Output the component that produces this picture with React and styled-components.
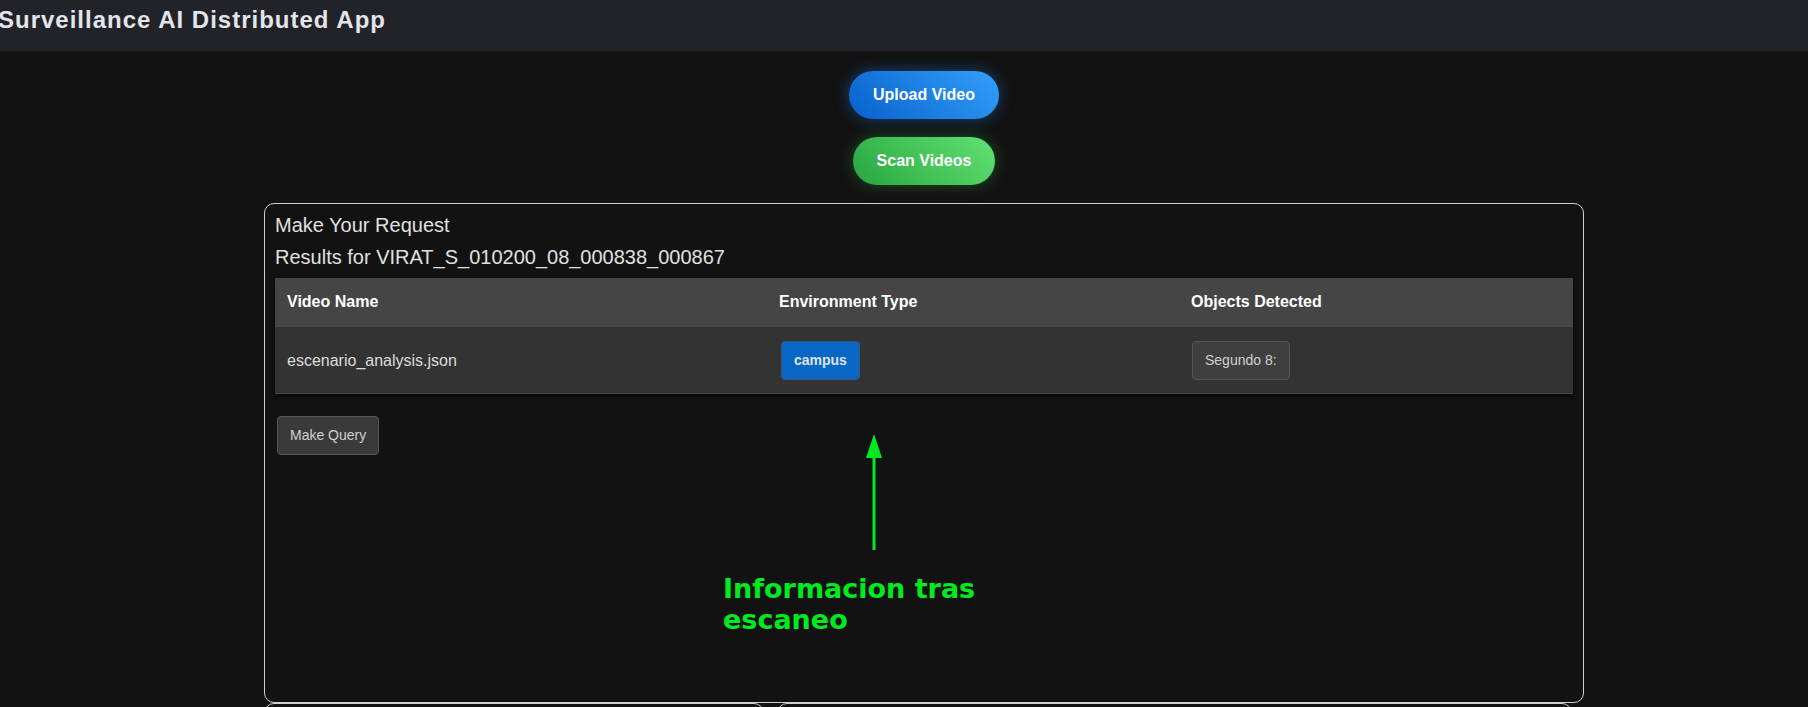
import React from "react";
import styled, { createGlobalStyle } from "styled-components";

const GlobalStyle = createGlobalStyle`
  html, body {
    margin: 0;
    padding: 0;
    background: #121212;
    overflow: hidden;
  }
  body {
    font-family: "Liberation Sans", Arial, sans-serif;
    color: #e0e0e0;
  }
  * { box-sizing: border-box; }
`;

const Header = styled.header`
  height: 51px;
  background: #212328;
  display: flex;
  align-items: flex-start;
`;

const Title = styled.h1`
  margin: 0 0 0 -2px;
  font-size: 24px;
  line-height: 40px;
  font-weight: 700;
  letter-spacing: 1px;
  color: #e2e5e9;
`;

const Main = styled.main`
  padding-left: 40px;
  display: flex;
  flex-direction: column;
  align-items: center;
`;

const PillButton = styled.button`
  margin-top: ${(p) => p.$top}px;
  padding: 15px 24px;
  border: none;
  border-radius: 999px;
  font-family: "Liberation Sans", Arial, sans-serif;
  font-size: 16px;
  line-height: 18px;
  font-weight: 700;
  color: #ffffff;
  cursor: pointer;
  background: ${(p) =>
    p.$variant === "green"
      ? "linear-gradient(45deg, #27a640, #62e272)"
      : "linear-gradient(45deg, #0860cc, #32a0fa)"};
  box-shadow: ${(p) =>
    p.$variant === "green"
      ? "0 0 16px rgba(60, 200, 80, 0.35)"
      : "0 0 16px rgba(30, 130, 240, 0.45)"};
`;

const Panel = styled.section`
  position: relative;
  margin-top: 18px;
  width: 1320px;
  height: 500px;
  padding: 10px 10px 10px;
  border: 1px solid #cfcfcf;
  border-radius: 10px;
`;

const PanelText = styled.p`
  margin: 0 0 ${(p) => p.$gap}px;
  font-size: 20px;
  line-height: 23px;
  color: #e0e0e0;
`;

const Table = styled.table`
  width: 100%;
  border-collapse: collapse;
  box-shadow: 0 2px 4px rgba(0, 0, 0, 0.6);
`;

const HeadCell = styled.th`
  width: ${(p) => p.$w || "auto"};
  padding: 15px 12px 16px;
  background: #454545;
  text-align: left;
  font-size: 16px;
  line-height: 18px;
  font-weight: 700;
  color: #ffffff;
`;

const Row = styled.tr`
  background: #333333;
  border-bottom: 1px solid #474747;
`;

const Cell = styled.td`
  padding: 14px 12px 13px;
  font-size: 16px;
  line-height: 18px;
  color: #dddddd;
  vertical-align: middle;
`;

const Badge = styled.span`
  display: inline-block;
  margin-left: 2px;
  padding: 10px 12px;
  line-height: 17px;
  font-size: 14px;
  font-weight: 700;
  color: #dde4ee;
  background: #0866c4;
  border: 1px solid #3c5677;
  border-radius: 4px;
`;

const GreyButton = styled.button`
  margin: ${(p) => p.$margin || "0"};
  padding: 10px 12px;
  line-height: 17px;
  font-family: "Liberation Sans", Arial, sans-serif;
  font-size: 14px;
  color: #d0d0d0;
  background: ${(p) => p.$bg || "#3f3f3f"};
  border: 1px solid #565656;
  border-radius: 4px;
  cursor: pointer;
`;

const Annotation = styled.div`
  position: absolute;
  left: 458px;
  top: 369px;
  font-family: "DejaVu Sans", sans-serif;
  font-size: 27px;
  font-weight: 700;
  line-height: 31.4px;
  color: #00ea20;
`;

const ArrowWrap = styled.div`
  position: absolute;
  left: 601px;
  top: 230px;
  width: 16px;
  height: 116px;
`;

const LowerRow = styled.div`
  display: flex;
  gap: 13px;
  width: 1320px;
`;

const LowerPanel = styled.div`
  width: ${(p) => p.$w}px;
  height: 200px;
  border: 1px solid #cfcfcf;
  border-radius: 10px;
`;

export default function App() {
  return (
    <>
      <GlobalStyle />
      <Header>
        <Title>Surveillance AI Distributed App</Title>
      </Header>
      <Main>
        <PillButton $top={20}>Upload Video</PillButton>
        <PillButton $top={18} $variant="green">
          Scan Videos
        </PillButton>
        <Panel>
          <PanelText $gap={9}>Make Your Request</PanelText>
          <PanelText $gap={9}>Results for VIRAT_S_010200_08_000838_000867</PanelText>
          <Table>
            <thead>
              <tr>
                <HeadCell $w="492px">Video Name</HeadCell>
                <HeadCell $w="412px">Environment Type</HeadCell>
                <HeadCell>Objects Detected</HeadCell>
              </tr>
            </thead>
            <tbody>
              <Row>
                <Cell>escenario_analysis.json</Cell>
                <Cell>
                  <Badge>campus</Badge>
                </Cell>
                <Cell>
                  <GreyButton $margin="0 0 0 1px">Segundo 8:</GreyButton>
                </Cell>
              </Row>
            </tbody>
          </Table>
          <GreyButton $margin="22px 0 0 2px" $bg="#3a3a3a">
            Make Query
          </GreyButton>
          <ArrowWrap>
            <svg width="16" height="116" viewBox="0 0 16 116">
              <polygon points="8,0 0,24 16,24" fill="#00ea20" />
              <rect x="6.5" y="20" width="3" height="96" fill="#00ea20" />
            </svg>
          </ArrowWrap>
          <Annotation>
            Informacion tras
            <br />
            escaneo
          </Annotation>
        </Panel>
        <LowerRow>
          <LowerPanel $w={500} />
          <LowerPanel $w={795} />
        </LowerRow>
      </Main>
    </>
  );
}
